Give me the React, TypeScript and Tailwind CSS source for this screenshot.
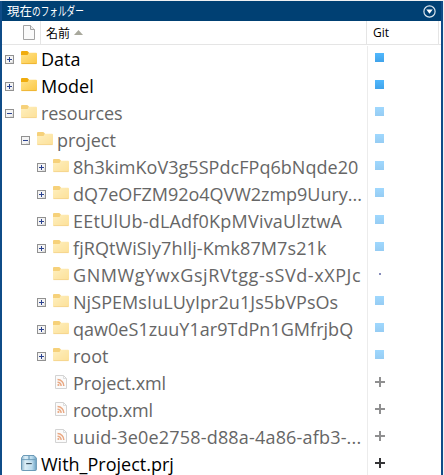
type Kind = "folder" | "xml" | "project";
type Status = "clean" | "dot" | "added";

interface Item {
  name: string;
  depth: number;
  kind: Kind;
  status: Status;
  toggle?: "plus" | "minus";
  faded?: boolean;
  tracking?: string;
}

const items: Item[] = [
  { name: "Data", depth: 0, kind: "folder", status: "clean", toggle: "plus" },
  { name: "Model", depth: 0, kind: "folder", status: "clean", toggle: "plus" },
  { name: "resources", depth: 0, kind: "folder", status: "clean", toggle: "minus", faded: true, tracking: "tracking-[-0.12px]" },
  { name: "project", depth: 1, kind: "folder", status: "clean", toggle: "minus", faded: true },
  { name: "8h3kimKoV3g5SPdcFPq6bNqde20", depth: 2, kind: "folder", status: "clean", toggle: "plus", faded: true, tracking: "tracking-[0.04px]" },
  { name: "dQ7eOFZM92o4QVW2zmp9Uury...", depth: 2, kind: "folder", status: "clean", toggle: "plus", faded: true, tracking: "tracking-[-0.03px]" },
  { name: "EEtUlUb-dLAdf0KpMVivaUlztwA", depth: 2, kind: "folder", status: "clean", toggle: "plus", faded: true, tracking: "tracking-[0.21px]" },
  { name: "fjRQtWiSIy7hIlj-Kmk87M7s21k", depth: 2, kind: "folder", status: "clean", toggle: "plus", faded: true, tracking: "tracking-[0.08px]" },
  { name: "GNMWgYwxGsjRVtgg-sSVd-xXPJc", depth: 2, kind: "folder", status: "dot", faded: true, tracking: "tracking-[0.58px]" },
  { name: "NjSPEMsIuLUyIpr2u1Js5bVPsOs", depth: 2, kind: "folder", status: "clean", toggle: "plus", faded: true, tracking: "tracking-[0.06px]" },
  { name: "qaw0eS1zuuY1ar9TdPn1GMfrjbQ", depth: 2, kind: "folder", status: "clean", toggle: "plus", faded: true, tracking: "tracking-[0.03px]" },
  { name: "root", depth: 2, kind: "folder", status: "clean", toggle: "plus", faded: true },
  { name: "Project.xml", depth: 2, kind: "xml", status: "added", faded: true, tracking: "tracking-[-0.1px]" },
  { name: "rootp.xml", depth: 2, kind: "xml", status: "added", faded: true, tracking: "tracking-[-0.22px]" },
  { name: "uuid-3e0e2758-d88a-4a86-afb3-...", depth: 2, kind: "xml", status: "added", faded: true, tracking: "tracking-[0.18px]" },
  { name: "With_Project.prj", depth: 0, kind: "project", status: "added" },
];

const indents = ["pl-[3px]", "pl-[19px]", "pl-[35px]"];

function Toggle({ sign }: { sign: "plus" | "minus" }) {
  return (
    <svg width="9" height="9" viewBox="0 0 9 9" className="shrink-0" shapeRendering="crispEdges">
      <rect x="0.5" y="0.5" width="8" height="8" fill="#f4f4f4" stroke="#919191" />
      <path d="M5 7h3M7 5v3" stroke="#dedede" />
      <path d="M2 4.5h5" stroke="#2c4390" />
      {sign === "plus" && <path d="M4.5 2v5" stroke="#2c4390" />}
    </svg>
  );
}

function FolderIcon() {
  return (
    <svg width="16" height="14" viewBox="0 0 16 14">
      <defs>
        <linearGradient id="folder" x1="0" y1="0" x2="1" y2="1">
          <stop offset="0" stopColor="#ffe38b" />
          <stop offset="1" stopColor="#fbc845" />
        </linearGradient>
      </defs>
      <path d="M0 1q0-1 1-1h5.3l1.6 1.6V6H0z" fill="#f0ac0e" />
      <path d="M0 4h6.5l1.4-2.2H15q1 0 1 1V12q0 1-1 1H1q-1 0-1-1z" fill="url(#folder)" />
      <path d="M0.5 12.6h15" stroke="#eaae2c" strokeWidth="0.8" />
    </svg>
  );
}

function XmlIcon() {
  return (
    <svg width="12" height="14" viewBox="0 0 12 14">
      <path d="M0.5 0.5h8l3 3v10h-11z" fill="#f9f9f9" stroke="#b0b0b0" />
      <path d="M8.5 0.5v3h3" fill="none" stroke="#b4b4b4" strokeWidth="0.8" />
      <circle cx="3.4" cy="10" r="1.1" fill="#d8621e" />
      <path d="M2.5 7.2a3.6 3.6 0 0 1 3.6 3.8M2.5 4.6a6.2 6.2 0 0 1 6.3 6.4" fill="none" stroke="#d8621e" strokeWidth="1.5" />
    </svg>
  );
}

function ProjectIcon() {
  return (
    <svg width="16" height="16" viewBox="0 0 16 16">
      <defs>
        <linearGradient id="box" x1="0" x2="1">
          <stop offset="0" stopColor="#8fb6ce" />
          <stop offset="0.25" stopColor="#dceef7" />
          <stop offset="0.7" stopColor="#b9daec" />
          <stop offset="1" stopColor="#6fa3c4" />
        </linearGradient>
      </defs>
      <path d="M2.2 0.5h10.8l2.4 2.6v11.4q0 1-1 1H1.5q-1 0-1-1V3.1z" fill="url(#box)" stroke="#5f91b0" strokeWidth="0.9" />
      <path d="M1 4.6h13.6" stroke="#6c9cb9" strokeWidth="0.9" />
      <path d="M8 1v3.4" stroke="#4d82a5" strokeWidth="0.9" />
      <path d="M4.8 7.2h6.4v3.2H4.8z" fill="#d3e8f3" />
      <path d="M5.2 8.6h5.6" stroke="#3a5363" strokeWidth="1.2" />
    </svg>
  );
}

function ItemIcon({ kind }: { kind: Kind }) {
  if (kind === "folder") return <FolderIcon />;
  if (kind === "xml") return <XmlIcon />;
  return <ProjectIcon />;
}

function StatusIcon({ status }: { status: Status }) {
  if (status === "clean") return <div className="h-[9px] w-[9px] bg-linear-to-b from-[#51b8fd] to-[#40a3ea]" />;
  if (status === "dot") return <div className="ml-1 h-[2px] w-[2px] bg-[#222d82]" />;
  return (
    <svg width="10" height="10" viewBox="0 0 10 10" shapeRendering="crispEdges">
      <path d="M4 0h2v4h4v2H6v4H4V6H0V4h4z" fill="#353537" />
    </svg>
  );
}

function Row({ item }: { item: Item }) {
  return (
    <div className="flex h-[27px] shrink-0">
      <div className={`flex w-[366px] shrink-0 items-center border-r border-[#ececec] ${indents[item.depth]}`}>
        <div className="w-4 shrink-0">{item.toggle && <Toggle sign={item.toggle} />}</div>
        <div className={`flex w-4 shrink-0 justify-center pb-[3px] ${item.faded ? "opacity-55" : ""}`}>
          <ItemIcon kind={item.kind} />
        </div>
        <div className={`ml-1 whitespace-nowrap text-[18px] leading-[27px] ${item.tracking ?? ""} ${item.faded ? "text-[#666666]" : "text-black"}`}>
          {item.name}
        </div>
      </div>
      <div className={`flex items-center pb-[4px] pl-[7px] ${item.faded ? "opacity-55" : ""}`}>
        <StatusIcon status={item.status} />
      </div>
    </div>
  );
}

export default function App() {
  return (
    <div className="flex h-[475px] w-[444px] flex-col overflow-hidden bg-[#eef0f2] pt-px pr-px font-['Open_Sans','Noto_Sans_CJK_JP',sans-serif]">
      <div className="flex min-h-0 flex-1 flex-col border-x-2 border-[#0f4c88] bg-white">
        <div className="flex h-5 shrink-0 items-center justify-between bg-[#004073] pr-[5px] pl-[5px] text-white">
          <div className="flex items-center whitespace-nowrap font-['Noto_Sans_CJK_JP',sans-serif] text-[12.5px] leading-5">
            <span>現在</span>
            <span className="origin-left scale-x-[0.69]">のフォルダー</span>
          </div>
          <svg width="13" height="13" viewBox="0 0 13 13">
            <circle cx="6.5" cy="6.5" r="5.6" fill="none" stroke="#dbe6ee" strokeWidth="1.2" />
            <path d="M3.3 4.5h6.4L6.5 8.8z" fill="#fff" />
          </svg>
        </div>
        <div className="flex h-6 shrink-0 border-b border-[#e5e5e5] text-[12px] text-black">
          <div className="flex w-[39px] items-center justify-end border-r border-[#e5e5e5] pr-[5px]">
            <svg width="12" height="15" viewBox="0 0 12 15">
              <path d="M0.5 0.5h7l4 4v10h-11z" fill="#fafafa" stroke="#a3a3a3" />
              <path d="M7.5 0.5v4h4" fill="#eeeeee" stroke="#a3a3a3" />
            </svg>
          </div>
          <div className="flex w-[326px] items-center border-r border-[#e5e5e5] pl-[5px]">
            <span className="font-['Noto_Sans_CJK_JP',sans-serif]">名前</span>
            <svg width="9" height="5" viewBox="0 0 9 5" className="ml-1">
              <path d="M4.5 0L9 5H0z" fill="#a8a89c" />
            </svg>
          </div>
          <div className="flex w-[72px] items-center border-r border-[#e5e5e5] pl-[6px]">Git</div>
        </div>
        <div className="flex min-h-0 flex-1 flex-col overflow-hidden pt-px">
          {items.map((item) => (
            <Row key={item.name} item={item} />
          ))}
        </div>
      </div>
    </div>
  );
}
